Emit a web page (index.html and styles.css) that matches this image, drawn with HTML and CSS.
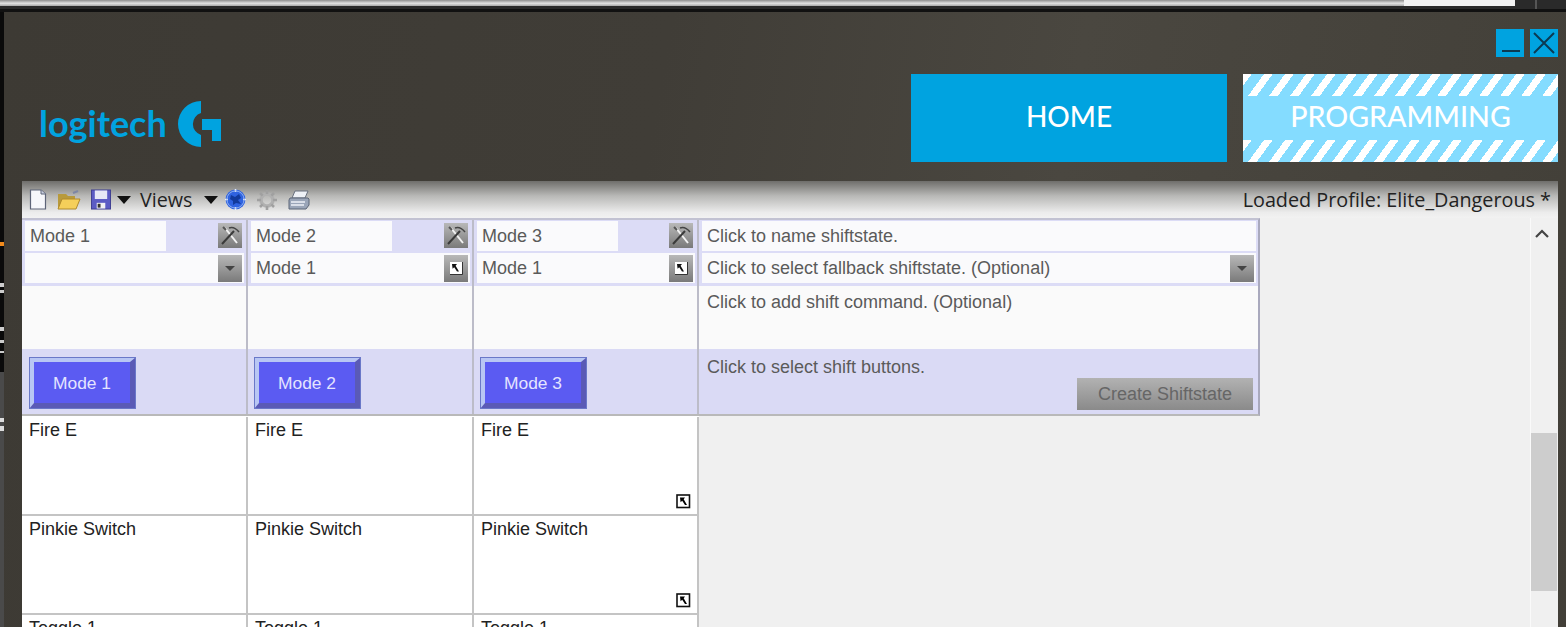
FILE: index.html
```html
<!DOCTYPE html>
<html lang="en">
<head>
    <meta charset="UTF-8">
    <title>Logitech Gaming Software - Programming</title>
    <link rel="stylesheet" href="styles.css">
</head>
<body>
    <svg class="defs" width="0" height="0">
        <defs>
            <linearGradient id="greyBtn" x1="0" y1="0" x2="0" y2="1">
                <stop offset="0" stop-color="#b8b8b8"/>
                <stop offset="1" stop-color="#7a7a7a"/>
            </linearGradient>
            <symbol id="tools" viewBox="0 0 24 25">
                <rect width="24" height="25" fill="url(#greyBtn)"/>
                <path d="M7 5 L19 20" stroke="#f2f2f2" stroke-width="2" fill="none"/>
                <path d="M4 21 L16 8" stroke="#3a3a3a" stroke-width="2" fill="none"/>
                <path d="M11 5 Q16 3 21 9" stroke="#444" stroke-width="1.5" fill="none"/>
                <path d="M5 4 L8 7" stroke="#555" stroke-width="2"/>
            </symbol>
            <symbol id="jump" viewBox="0 0 24 27">
                <rect width="24" height="27" fill="url(#greyBtn)"/>
                <rect x="6" y="7" width="12" height="12" fill="#fff"/>
                <path d="M6 19.5 H18.5 V7" stroke="#333" stroke-width="1" fill="none"/>
                <path d="M8 9 H13 L11.6 10.8 L15 16.5 H13 L10.2 12.3 L8.6 13.8 Z" fill="#111"/>
            </symbol>
            <symbol id="jumpPlain" viewBox="0 0 15 15">
                <rect x="1" y="1" width="12.5" height="12.5" fill="#fff" stroke="#111" stroke-width="1.6"/>
                <path d="M4 3.5 H9 L7.7 5.2 L11 11 H9 L6.2 6.8 L4.6 8.2 Z" fill="#000"/>
            </symbol>
            <symbol id="drop" viewBox="0 0 24 27">
                <rect width="24" height="27" fill="url(#greyBtn)"/>
                <path d="M7 11 H17 L12 16 Z" fill="#444"/>
            </symbol>
            <symbol id="arrowDown" viewBox="0 0 14 8">
                <path d="M0 0 H14 L7 8 Z" fill="#111"/>
            </symbol>
        </defs>
    </svg>

    <div class="desk-top">
        <div class="desk-bar"></div>
        <div class="desk-white"></div>
        <div class="desk-dark"></div>
    </div>

    <div class="desk-row">
        <div class="desk-left"></div>

        <div class="window">
            <header class="app-header">
                <div class="logo">
                    <span class="logo-text">logitech</span>
                    <svg class="logo-g" width="45" height="46" viewBox="0 0 45 46">
                        <path d="M24 0 A23 23 0 0 0 24 46 V34 A11.5 11.5 0 0 1 24 12 Z" fill="#00a3e0"/>
                        <path d="M25 18 H44 V40 H35 V29 H25 Z" fill="#00a3e0"/>
                    </svg>
                </div>
                <div class="header-right">
                    <div class="win-buttons">
                        <button class="win-btn">
                            <svg width="28" height="28" viewBox="0 0 28 28"><path d="M6 22 H24" stroke="#0b3a52" stroke-width="2"/></svg>
                        </button>
                        <button class="win-btn">
                            <svg width="28" height="28" viewBox="0 0 28 28"><path d="M4 4 L24 24 M24 4 L4 24" stroke="#0b3a52" stroke-width="2"/></svg>
                        </button>
                    </div>
                    <nav class="main-nav">
                        <a class="nav-tab" href="#">HOME</a>
                        <a class="nav-tab active" href="#">
                            <span class="stripes"></span>
                            <span class="tab-label">PROGRAMMING</span>
                            <span class="stripes"></span>
                        </a>
                    </nav>
                </div>
            </header>

            <section class="panel">
                <div class="toolbar">
                    <svg class="tool doc" width="18" height="21" viewBox="0 0 18 21">
                        <path d="M1.5 1 H12 L16.5 5 V20 H1.5 Z" fill="#f6f7fb" stroke="#5d6478" stroke-width="1.2"/>
                        <path d="M12 1 V5 H16.5" fill="#c9cfe0" stroke="#5d6478" stroke-width="1"/>
                    </svg>
                    <svg class="tool folder" width="24" height="20" viewBox="0 0 24 20">
                        <path d="M1 4 H9 L11 6 H18 V18 H1 Z" fill="#b89a3c"/>
                        <path d="M5 9 H23 L19 19 H1 Z" fill="#f5cf5a" stroke="#b08a2c" stroke-width="1"/>
                        <path d="M16 3 L21 1" stroke="#7d86a5" stroke-width="2"/>
                    </svg>
                    <svg class="tool save" width="20" height="21" viewBox="0 0 21 21">
                        <rect x="0.5" y="0.5" width="20" height="20" fill="#5b5bc4" stroke="#3d3d90"/>
                        <rect x="4" y="1" width="13" height="9" fill="#e6e8f6"/>
                        <rect x="6" y="14" width="9" height="6" fill="#f0f0f4"/>
                        <rect x="7" y="15" width="3" height="4" fill="#333"/>
                    </svg>
                    <svg class="arrow arrow-save" width="14" height="8"><use href="#arrowDown"/></svg>
                    <span class="views-label">Views</span>
                    <svg class="arrow arrow-views" width="14" height="8"><use href="#arrowDown"/></svg>
                    <svg class="tool globe" width="21" height="21" viewBox="0 0 21 21">
                        <circle cx="10.5" cy="10.5" r="10" fill="#2f63e0"/>
                        <path d="M10.5 0 V3 M10.5 18 V21 M0 10.5 H3 M18 10.5 H21" stroke="#e8eefc" stroke-width="1.6"/>
                        <circle cx="10.5" cy="10.5" r="8.6" fill="none" stroke="#8fb0f2" stroke-width="1"/>
                        <path d="M6 6 L10 8 L14 5 L16 9 L13 11 L16 15 L11 14 L8 16 L8 12 L5 10 Z" fill="#123a9c"/>
                    </svg>
                    <svg class="tool gear" width="20" height="20" viewBox="0 0 20 20">
                        <circle cx="10" cy="10" r="6" fill="none" stroke="#b0b0b0" stroke-width="3.4"/>
                        <path d="M10 0 V4 M10 16 V20 M0 10 H4 M16 10 H20 M3 3 L5.6 5.6 M14.4 14.4 L17 17 M17 3 L14.4 5.6 M5.6 14.4 L3 17" stroke="#a0a0a0" stroke-width="2.6"/>
                    </svg>
                    <svg class="tool printer" width="22" height="20" viewBox="0 0 22 20">
                        <path d="M7 1 H20 L17 8 H4 Z" fill="#eef1f7" stroke="#68707f"/>
                        <path d="M2 8 H20 L21 9 V15 L18 19 H1 V10 Z" fill="#9aa5b8" stroke="#5d6678"/>
                        <path d="M3 12 H17 M3 15 H16" stroke="#eef1f7" stroke-width="1.6"/>
                    </svg>
                    <span class="profile-label">Loaded Profile: Elite_Dangerous *</span>
                </div>

                <div class="panel-body">
                    <div class="shift-area">
                        <div class="shift-head">
                            <div class="cell name-cell">
                                <div class="field short">Mode 1</div>
                                <svg class="btn-icon" width="24" height="25"><use href="#tools"/></svg>
                            </div>
                            <div class="cell name-cell">
                                <div class="field short">Mode 2</div>
                                <svg class="btn-icon" width="24" height="25"><use href="#tools"/></svg>
                            </div>
                            <div class="cell name-cell">
                                <div class="field short">Mode 3</div>
                                <svg class="btn-icon" width="24" height="25"><use href="#tools"/></svg>
                            </div>
                            <div class="cell name-cell last">
                                <div class="field">Click to name shiftstate.</div>
                            </div>

                            <div class="cell fallback-cell">
                                <div class="field">
                                    <svg class="btn-icon" width="24" height="27"><use href="#drop"/></svg>
                                </div>
                            </div>
                            <div class="cell fallback-cell">
                                <div class="field">Mode 1
                                    <svg class="btn-icon" width="24" height="27"><use href="#jump"/></svg>
                                </div>
                            </div>
                            <div class="cell fallback-cell">
                                <div class="field">Mode 1
                                    <svg class="btn-icon" width="24" height="27"><use href="#jump"/></svg>
                                </div>
                            </div>
                            <div class="cell fallback-cell last">
                                <div class="field">Click to select fallback shiftstate. (Optional)
                                    <svg class="btn-icon" width="24" height="27"><use href="#drop"/></svg>
                                </div>
                            </div>

                            <div class="cell command-cell"></div>
                            <div class="cell command-cell"></div>
                            <div class="cell command-cell"></div>
                            <div class="cell command-cell last">Click to add shift command. (Optional)</div>

                            <div class="cell button-cell"><button class="mode-btn">Mode 1</button></div>
                            <div class="cell button-cell"><button class="mode-btn">Mode 2</button></div>
                            <div class="cell button-cell"><button class="mode-btn">Mode 3</button></div>
                            <div class="cell button-cell last">
                                <span>Click to select shift buttons.</span>
                                <button class="create-btn">Create Shiftstate</button>
                            </div>
                        </div>

                        <div class="shift-list">
                            <div class="item">Fire E</div>
                            <div class="item">Fire E</div>
                            <div class="item">Fire E
                                <svg class="item-icon" width="15" height="15"><use href="#jumpPlain"/></svg>
                            </div>
                            <div class="item">Pinkie Switch</div>
                            <div class="item">Pinkie Switch</div>
                            <div class="item">Pinkie Switch
                                <svg class="item-icon" width="15" height="15"><use href="#jumpPlain"/></svg>
                            </div>
                            <div class="item">Toggle 1</div>
                            <div class="item">Toggle 1</div>
                            <div class="item">Toggle 1</div>
                        </div>
                    </div>

                    <div class="scrollbar">
                        <svg class="scroll-up" width="14" height="9" viewBox="0 0 14 9">
                            <path d="M1 8 L7 2 L13 8" fill="none" stroke="#444" stroke-width="2.2"/>
                        </svg>
                        <div class="scroll-thumb"></div>
                    </div>
                </div>
            </section>
        </div>
    </div>
</body>
</html>
```

FILE: styles.css
```css
* {
    margin: 0;
    padding: 0;
    box-sizing: border-box;
}

html, body {
    height: 627px;
    overflow: hidden;
}

body {
    font-family: "Liberation Sans", Arial, sans-serif;
    font-size: 18px;
    color: #222;
    background-color: #0b0b0b;
}

button {
    font-family: inherit;
    border: none;
}

.defs {
    display: block;
    height: 0;
}

/* the desktop behind the window */
.desk-top {
    display: flex;
    height: 12px;
    border-bottom: 3px solid #111;
    background-color: #2a2a2a;
}

.desk-bar {
    width: 1404px;
    height: 6px;
    background: linear-gradient(#8e8e8e 0, #bdbdbd 30%, #e2e2e2 55%, #a8a8a8 100%);
}

.desk-white {
    width: 111px;
    height: 6px;
    background-color: #f2f2f2;
}

.desk-dark {
    margin-left: 20px;
    width: 2px;
    background-color: #555;
}

.desk-row {
    display: flex;
    height: 615px;
}

.desk-left {
    width: 4px;
    background: linear-gradient(#0a0a0a 0, #0a0a0a 230px, #f08a1c 230px, #f08a1c 234px, #0a0a0a 234px, #0a0a0a 271px, #ccc 271px, #ccc 275px, #0a0a0a 275px, #0a0a0a 278px, #ccc 278px, #ccc 281px, #0a0a0a 281px, #0a0a0a 315px, #ccc 315px, #ccc 319px, #0a0a0a 319px, #0a0a0a 328px, #ccc 328px, #ccc 331px, #0a0a0a 331px, #0a0a0a 339px, #ccc 339px, #ccc 341px, #0a0a0a 341px, #0a0a0a 360px, #4a4a4a 360px, #4a4a4a 406px, #ddd 406px, #ddd 410px, #4a4a4a 410px, #4a4a4a 414px, #ddd 414px, #ddd 419px, #4a4a4a 419px, #4a4a4a 100%);
}

.window {
    flex: 1;
    display: flex;
    flex-direction: column;
    padding: 0 8px 0 18px;
    background: linear-gradient(100deg, #3d3a34 0, #403d37 40%, #4a4740 65%, #423f38 100%);
}

/* header */
.app-header {
    display: flex;
    justify-content: space-between;
    height: 169px;
}

.logo {
    display: flex;
    align-items: flex-start;
    margin-top: 89px;
    margin-left: 17px;
}

.logo-text {
    font-family: Lato, sans-serif;
    font-size: 36px;
    font-weight: 700;
    line-height: 44px;
    color: #00a3e0;
}

.logo-g {
    margin-left: 10px;
}

.header-right {
    display: flex;
    flex-direction: column;
    align-items: flex-end;
    padding-top: 17px;
}

.win-buttons {
    display: flex;
    gap: 6px;
    margin-bottom: 17px;
}

.win-btn {
    width: 28px;
    height: 28px;
    background-color: #00a3e0;
}

.win-btn svg {
    display: block;
}

.main-nav {
    display: flex;
    gap: 16px;
}

.nav-tab {
    width: 316px;
    height: 88px;
    padding-bottom: 4px;
    display: flex;
    flex-direction: column;
    justify-content: center;
    align-items: center;
    font-family: Lato, sans-serif;
    font-size: 28px;
    font-weight: 500;
    color: #fff;
    text-decoration: none;
    background-color: #00a3e0;
}

.nav-tab.active {
    width: 315px;
    padding-bottom: 0;
    justify-content: space-between;
    background-color: #84dcff;
}

.tab-label {
    font-size: 28.6px;
    line-height: 32px;
    margin-bottom: 5px;
}

.stripes {
    display: block;
    width: 100%;
    height: 22px;
    background: repeating-linear-gradient(126deg, #fff 0, #fff 7px, transparent 7px, transparent 17px);
}

/* main panel */
.panel {
    flex: 1;
    display: flex;
    flex-direction: column;
    min-height: 0;
    background-color: #f0f0f0;
}

.toolbar {
    display: flex;
    align-items: center;
    height: 37px;
    padding: 0 7px;
    background: linear-gradient(#6f6e6b 0, #b8b8b6 40%, #ececec 85%, #f2f2f2 100%);
}

.tool {
    flex: none;
}

.folder { margin-left: 10px; }
.save { margin-left: 10px; }
.arrow-save { margin-left: 6px; }
.arrow-views { margin-left: 12px; }
.globe { margin-left: 7px; }
.gear { margin-left: 11px; }
.printer { margin-left: 11px; }

.views-label {
    margin-left: 9px;
    font-family: "Open Sans", sans-serif;
    font-size: 19.7px;
    color: #222;
}

.profile-label {
    margin-left: auto;
    font-family: "Open Sans", sans-serif;
    font-size: 19.8px;
    color: #222;
}

.panel-body {
    flex: 1;
    display: flex;
    min-height: 0;
    overflow: hidden;
}

.shift-area {
    width: 1238px;
}

/* shift table */
.shift-head {
    display: grid;
    grid-template-columns: 226px 226px 225px 559px;
    grid-template-rows: 32px 34px 63px 65px;
    border-top: 2px solid #c2c2d2;
    border-right: 2px solid #a9a9bd;
    border-bottom: 2px solid #b9b9b9;
    color: #5a5a5a;
}

.cell {
    display: flex;
    align-items: flex-start;
    border-right: 2px solid #bcbcc8;
    position: relative;
}

.cell.last {
    border-right: none;
}

.name-cell, .fallback-cell {
    padding: 1px 2px 0 3px;
    background-color: #dcdcf6;
}

.field {
    flex: 1;
    display: flex;
    align-items: center;
    justify-content: space-between;
    height: 30px;
    padding-left: 5px;
    background-color: #fafafc;
}

.field.short {
    flex: none;
    width: 141px;
}

.name-cell .field.short + .btn-icon {
    margin-left: auto;
    margin-top: 2px;
}

.btn-icon {
    flex: none;
    margin-left: auto;
    margin-right: 2px;
}

.name-cell.last .field {
    margin-right: 0;
}

.command-cell {
    padding: 6px 8px;
    background-color: #fafafa;
}

.button-cell {
    padding: 8px 6px;
    background-color: #dadaf5;
}

.button-cell:first-child,
.shift-head .button-cell:nth-child(13) {
    padding-left: 7px;
}

.button-cell.last {
    display: block;
    padding: 8px 8px;
}

.mode-btn {
    width: 107px;
    height: 52px;
    padding-top: 1px;
    font-size: 17.4px;
    color: #e4e4ff;
    background-color: #5b5bf2;
    border-style: solid;
    border-width: 5px 6px 6px 5px;
    border-color: #b8c6f4 #5a5ab6 #5a5ab6 #b8c6f4;
    outline: 1px solid #6a78c8;
    outline-offset: -1px;
}

.create-btn {
    position: absolute;
    right: 5px;
    bottom: 4px;
    width: 176px;
    height: 32px;
    font-size: 18px;
    color: #666;
    background: linear-gradient(#b2b2b2 0, #8a8a8a 100%);
}

.shift-list {
    display: grid;
    grid-template-columns: 226px 226px 225px;
    grid-auto-rows: 99px;
    width: 677px;
    padding-top: 1px;
    background-color: #fff;
    color: #222;
}

.item {
    position: relative;
    padding: 3px 7px;
    border-right: 2px solid #c4c4c4;
    border-bottom: 2px solid #c4c4c4;
}

.item-icon {
    position: absolute;
    right: 6px;
    bottom: 5px;
}

/* scrollbar */
.scrollbar {
    position: relative;
    width: 28px;
    margin-left: 270px;
    border-left: 1px solid #fafafa;
    background-color: #f0f0f0;
}

.scroll-up {
    position: absolute;
    top: 11px;
    left: 4px;
}

.scroll-thumb {
    position: absolute;
    top: 215px;
    left: 0;
    width: 26px;
    height: 158px;
    background-color: #cdcdcd;
}
```
